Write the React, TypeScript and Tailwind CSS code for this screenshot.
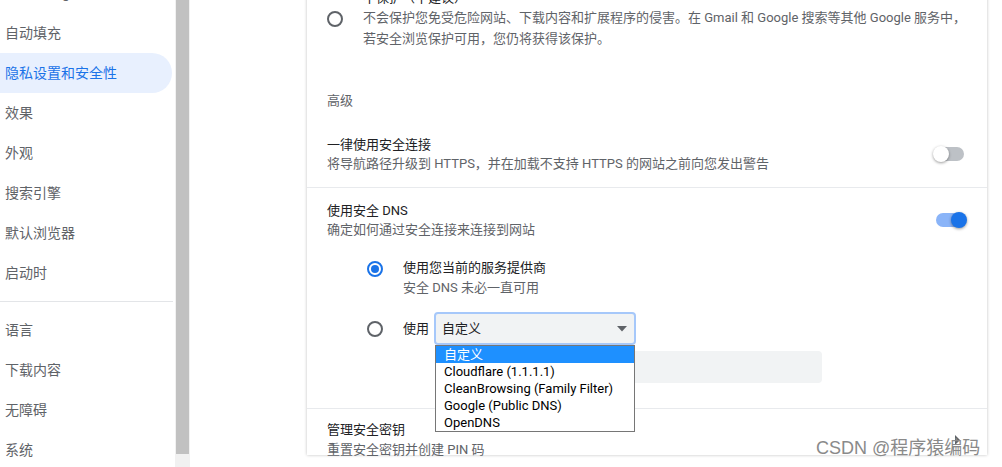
import React from 'react';

const font = 'font-[Roboto,"Noto_Sans_CJK_SC",sans-serif]';

const menuTop = ['您与 Google', '自动填充', '隐私设置和安全性', '效果', '外观', '搜索引擎', '默认浏览器', '启动时'];
const menuBottom = ['语言', '下载内容', '无障碍', '系统'];
const dnsOptions = ['自定义', 'Cloudflare (1.1.1.1)', 'CleanBrowsing (Family Filter)', 'Google (Public DNS)', 'OpenDNS'];

const Radio = ({ checked }: { checked?: boolean }) => (
    <span
        className={`w-4 h-4 shrink-0 rounded-full border-2 flex items-center justify-center ${
            checked ? 'border-[#1a73e8]' : 'border-[#5f6368]'
        }`}
    >
        {checked && <span className="w-2 h-2 rounded-full bg-[#1a73e8]" />}
    </span>
);

const Toggle = ({ on }: { on?: boolean }) => (
    <span className="relative w-[34px] h-4 shrink-0 flex items-center">
        <span className={`mx-[3px] w-[28px] h-[14px] rounded-full ${on ? 'bg-[#8ab4f8]' : 'bg-[#bdc1c6]'}`} />
        <span
            className={`absolute top-0 w-4 h-4 rounded-full shadow-[0_1px_3px_rgba(0,0,0,0.4)] ${
                on ? 'right-0 bg-[#1a73e8]' : 'left-0 bg-white'
            }`}
        />
    </span>
);

const MenuItem = ({ label }: { label: string }) => {
    const active = label === '隐私设置和安全性';
    return (
        <div
            className={`h-10 shrink-0 flex items-center pl-[5px] mr-[3px] text-[14px] rounded-r-full ${
                active ? 'bg-[#e8f0fe] text-[#1a73e8]' : 'text-[#5f6368]'
            }`}
        >
            {label}
        </div>
    );
};

export default function App() {
    return (
        <div className={`relative w-[1002px] h-[467px] overflow-hidden flex bg-white ${font}`}>
            {/* 左侧菜单 */}
            <div className="w-[175px] shrink-0 flex flex-col mt-[-27px]">
                {menuTop.map((m) => (
                    <MenuItem key={m} label={m} />
                ))}
                <div className="my-2 h-px shrink-0 bg-[#e3e5e8] mr-[2px]" />
                {menuBottom.map((m) => (
                    <MenuItem key={m} label={m} />
                ))}
            </div>

            {/* 滚动条 */}
            <div className="w-[15px] shrink-0 bg-[#f1f1f1] flex flex-col">
                <div className="mx-px h-[454px] shrink-0 bg-[#c1c1c1]" />
            </div>

            {/* 主内容 */}
            <div className="flex-1 pl-[117px]">
                <div className="w-[680px] h-full bg-white shadow-[0_0_3px_rgba(0,0,0,0.25)] text-[13px]">
                    {/* 不保护 */}
                    <div className="px-5 mt-[-12px] flex items-center gap-5">
                        <Radio />
                        <div>
                            <div className="leading-[19px] text-[#202124]">不保护（不建议）</div>
                            <div className="leading-[21px] text-[#5f6368]">
                                不会保护您免受危险网站、下载内容和扩展程序的侵害。在 Gmail 和 Google 搜索等其他 Google 服务中，
                                <br />
                                若安全浏览保护可用，您仍将获得该保护。
                            </div>
                        </div>
                    </div>

                    <div className="px-5 mt-[42px] leading-5 text-[#5f6368]">高级</div>

                    {/* 一律使用安全连接 */}
                    <div className="mt-[10px] py-[14px] px-5 border-b border-[#e8eaed] flex items-center justify-between">
                        <div>
                            <div className="leading-[19px] text-[#202124]">一律使用安全连接</div>
                            <div className="leading-[19px] text-[#5f6368]">
                                将导航路径升级到 HTTPS，并在加载不支持 HTTPS 的网站之前向您发出警告
                            </div>
                        </div>
                        <Toggle />
                    </div>

                    {/* 使用安全 DNS */}
                    <div className="pt-[13px] pb-[25px] px-5 border-b border-[#e8eaed]">
                        <div className="flex items-center justify-between">
                            <div>
                                <div className="leading-[19px] text-[#202124]">使用安全 DNS</div>
                                <div className="leading-[19px] text-[#5f6368]">确定如何通过安全连接来连接到网站</div>
                            </div>
                            <Toggle on />
                        </div>

                        <div className="pl-10 mt-[19px] flex items-start gap-5">
                            <span className="mt-[3px]">
                                <Radio checked />
                            </span>
                            <div>
                                <div className="leading-5 text-[#202124]">使用您当前的服务提供商</div>
                                <div className="leading-5 text-[#5f6368]">安全 DNS 未必一直可用</div>
                            </div>
                        </div>

                        <div className="pl-10 mt-[14px] flex items-center gap-5">
                            <Radio />
                            <div className="flex items-center gap-[5px]">
                                <span className="text-[#202124]">使用</span>
                                <div className="relative">
                                    <div className="w-[202px] h-[33px] rounded bg-[#f1f3f4] border-2 border-[#a6c8fa] flex items-center justify-between pl-[6px] pr-[6px] text-[#202124]">
                                        <span>自定义</span>
                                        <svg width="12" height="6" viewBox="0 0 12 6">
                                            <path d="M1 0h10L6 5.5z" fill="#5f6368" />
                                        </svg>
                                    </div>
                                    {/* 下拉列表 */}
                                    <div className="absolute z-10 top-full left-px w-[200px] bg-white border border-[#767676] text-[13px] leading-[17px] text-black">
                                        {dnsOptions.map((o, i) => (
                                            <div key={o} className={`px-2 ${i === 0 ? 'bg-[#1e90ff] text-white' : ''}`}>
                                                {o}
                                            </div>
                                        ))}
                                    </div>
                                </div>
                            </div>
                        </div>

                        <div className="pl-[108px] mt-[6px]">
                            <div className="w-[387px] h-8 rounded bg-[#f1f3f4]" />
                        </div>
                    </div>

                    {/* 管理安全密钥 */}
                    <div className="pt-[11px] px-5 flex items-center justify-between">
                        <div>
                            <div className="leading-5 text-[#202124]">管理安全密钥</div>
                            <div className="leading-5 text-[#5f6368]">重置安全密钥并创建 PIN 码</div>
                        </div>
                        <svg width="5" height="10" viewBox="0 0 5 10" className="mr-[7px]">
                            <path d="M0 0l5 5-5 5z" fill="#5f6368" />
                        </svg>
                    </div>
                </div>
            </div>

            {/* 水印 */}
            <div className="absolute left-[816px] top-[437px] leading-[22px] text-[18px] text-[#8a8a8a] font-[Arial,'Liberation_Sans','Noto_Sans_CJK_SC',sans-serif]">
                CSDN @程序猿编码
            </div>
        </div>
    );
}
